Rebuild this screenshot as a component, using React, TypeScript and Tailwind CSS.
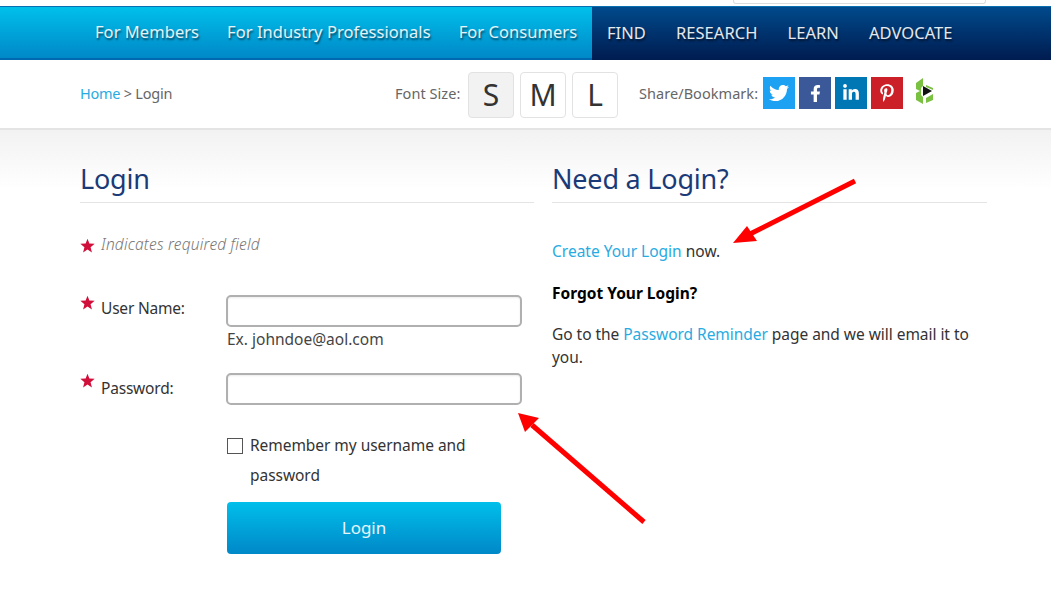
import { FaTwitter, FaFacebookF, FaLinkedinIn, FaPinterestP } from 'react-icons/fa';

const font = { fontFamily: '"Noto Sans", "Open Sans", sans-serif' };

const audienceLinks = ['For Members', 'For Industry Professionals', 'For Consumers'];
const topicLinks = ['FIND', 'RESEARCH', 'LEARN', 'ADVOCATE'];

function Star({ className = '' }: { className?: string }) {
  return (
    <svg viewBox="0 0 24 24" className={`w-[15px] h-[15px] fill-[#d0103a] shrink-0 ${className}`}>
      <path d="M12 1l3 7.8 8.5.5-6.6 5.4 2.2 8.3-7.1-4.6-7.1 4.6 2.2-8.3L.5 9.3 9 8.8z" />
    </svg>
  );
}

function NavLink({ label }: { label: string }) {
  return (
    <a className="whitespace-nowrap text-[16.5px] tracking-[0.05px] text-white/90 [text-shadow:1px_2px_2px_rgba(0,0,0,0.55)]">
      {label}
    </a>
  );
}

function SizeButton({ label, active }: { label: string; active?: boolean }) {
  return (
    <button
      className={`w-[46px] h-[46px] rounded-[4px] border border-[#e2e2e2] text-[30px] leading-none text-[#333] ${
        active ? 'bg-[#f2f2f2]' : 'bg-white'
      }`}
    >
      {label}
    </button>
  );
}

function ShareIcon({ bg, children }: { bg: string; children: React.ReactNode }) {
  return <span className={`w-8 h-8 flex items-center justify-center text-white ${bg}`}>{children}</span>;
}

export default function App() {
  return (
    <div style={font} className="relative w-[1051px] h-[604px] overflow-hidden bg-white text-[#333] text-[15.5px]">
      {/* search box peeking in from above */}
      <div className="h-[6px] pl-[733px]">
        <div className="w-[253px] h-[4px] bg-white border-x border-b border-[#dcdcdc] rounded-b-[3px]"></div>
      </div>

      {/* Main nav */}
      <div className="h-[54px] flex border-t border-[#0a6fb0]">
        <div className="w-[592px] pl-[95px] flex items-center gap-[28px] bg-gradient-to-b from-[#00c0ea] to-[#0088c8] border-b-2 border-[#0068b0]">
          {audienceLinks.map((label) => (
            <NavLink key={label} label={label} />
          ))}
        </div>
        <div className="flex-1 pl-[15px] flex items-center gap-[30px] bg-gradient-to-b from-[#004a8c] to-[#001c50]">
          {topicLinks.map((label) => (
            <NavLink key={label} label={label} />
          ))}
        </div>
      </div>

      {/* Breadcrumb + tools */}
      <div className="h-[70px] pl-[80px] flex items-center border-b-2 border-[#e4e4e4]">
        <div className="w-[315px] text-[14.5px] tracking-[-0.25px] text-[#666]">
          <a className="text-[#29abe2]">Home</a> &gt; Login
        </div>
        <span className="w-[73px] text-[14.5px] tracking-[0.05px] text-[#666] whitespace-nowrap">Font Size:</span>
        <div className="flex gap-[6px] mt-[2px]">
          <SizeButton label="S" active />
          <SizeButton label="M" />
          <SizeButton label="L" />
        </div>
        <span className="ml-[21px] w-[124px] text-[14.5px] tracking-[0.05px] text-[#666] whitespace-nowrap">Share/Bookmark:</span>
        <div className="flex gap-1 -mt-[2px]">
          <ShareIcon bg="bg-[#1da1f2]">
            <FaTwitter size={20} />
          </ShareIcon>
          <ShareIcon bg="bg-[#3b5998]">
            <FaFacebookF size={17} />
          </ShareIcon>
          <ShareIcon bg="bg-[#0077b5]">
            <FaLinkedinIn size={18} />
          </ShareIcon>
          <ShareIcon bg="bg-[#cb2027]">
            <FaPinterestP size={18} />
          </ShareIcon>
        </div>
        <svg viewBox="0 0 18 28" className="w-[18px] h-[28px] ml-[12px] -mt-[6px]">
          <path
            d="M1 6L8 1V9L6 11V18L8 20V27L1 23V16L5 14L1 12Z M11 8L18 11V13L11 10Z M11 21L18 17V23L11 26Z"
            fill="#7ac142"
          />
          <path d="M8 9L17 14L8 19Z" fill="#111" />
        </svg>
      </div>

      {/* Content */}
      <div className="h-[60px] -mb-[60px] bg-gradient-to-b from-[#f2f2f2] to-white"></div>
      <div className="relative pl-[80px] pt-[29px] flex gap-[18px]">
        <div className="w-[454px]">
          <h2 className="text-[27px] leading-[40px] tracking-[-0.2px] pb-[3px] text-[#1b3a78] border-b border-[#e4e4e4]">Login</h2>

          <div className="mt-[31px] h-[22px] flex items-center gap-[6px]">
            <Star />
            <em className="text-[15.5px] tracking-[0.2px] font-light text-[#777]">Indicates required field</em>
          </div>

          <div className="mt-[39px] flex">
            <div className="w-[146px] flex items-start gap-[6px]">
              <Star />
              <label className="mt-[3px] leading-[21px] -mb-1 tracking-[-0.2px]">User Name:</label>
            </div>
            <div>
              <input className="block w-[296px] h-[32px] bg-white rounded-[5px] border-2 border-[#b0b0b0] shadow-[inset_0_1px_2px_rgba(0,0,0,0.08)]" />
              <div className="pl-[1px] leading-[24px] text-[#444]">Ex. johndoe@aol.com</div>
            </div>
          </div>

          <div className="mt-[22px] flex">
            <div className="w-[146px] flex items-start gap-[6px]">
              <Star />
              <label className="mt-[5px] leading-[21px] tracking-[-0.2px]">Password:</label>
            </div>
            <input type="password" className="block w-[296px] h-[32px] bg-white rounded-[5px] border-2 border-[#b0b0b0] shadow-[inset_0_1px_2px_rgba(0,0,0,0.08)]" />
          </div>

          <div className="mt-[25px] ml-[147px] flex gap-[7px]">
            <input type="checkbox" className="appearance-none mt-[8px] w-[16px] h-[16px] shrink-0 bg-white border border-[#555]" />
            <span className="w-[240px] leading-[30px] tracking-[-0.05px]">Remember my username and password</span>
          </div>

          <button className="mt-[12px] ml-[147px] block w-[274px] h-[52px] rounded-[4px] bg-gradient-to-b from-[#00bfea] to-[#0088c8] text-white/90 text-[17px]">
            Login
          </button>
        </div>

        <div className="w-[435px]">
          <h2 className="text-[27px] leading-[40px] tracking-[-0.2px] pb-[3px] text-[#1b3a78] border-b border-[#e4e4e4]">Need a Login?</h2>
          <p className="mt-[36px] leading-[24px]">
            <a className="text-[#29abe2]">Create Your Login</a> now.
          </p>
          <p className="mt-[18px] leading-[24px] font-bold text-black">Forgot Your Login?</p>
          <p className="mt-[18px] leading-[23px] tracking-[-0.04px]">
            Go to the <a className="text-[#29abe2]">Password Reminder</a> page and we will email it to you.
          </p>
        </div>
      </div>

      {/* Annotation arrows drawn over the page */}
      <svg viewBox="0 0 1051 604" className="absolute inset-0 w-[1051px] h-[604px] pointer-events-none">
        <line x1="855" y1="181" x2="750" y2="234" stroke="#ff0000" strokeWidth="5" />
        <path d="M733 243L747 226L757 241Z" fill="#ff0000" />
        <line x1="644" y1="522" x2="532" y2="425" stroke="#ff0000" strokeWidth="5" />
        <path d="M518 413L539 418L525 432Z" fill="#ff0000" />
      </svg>
    </div>
  );
}
